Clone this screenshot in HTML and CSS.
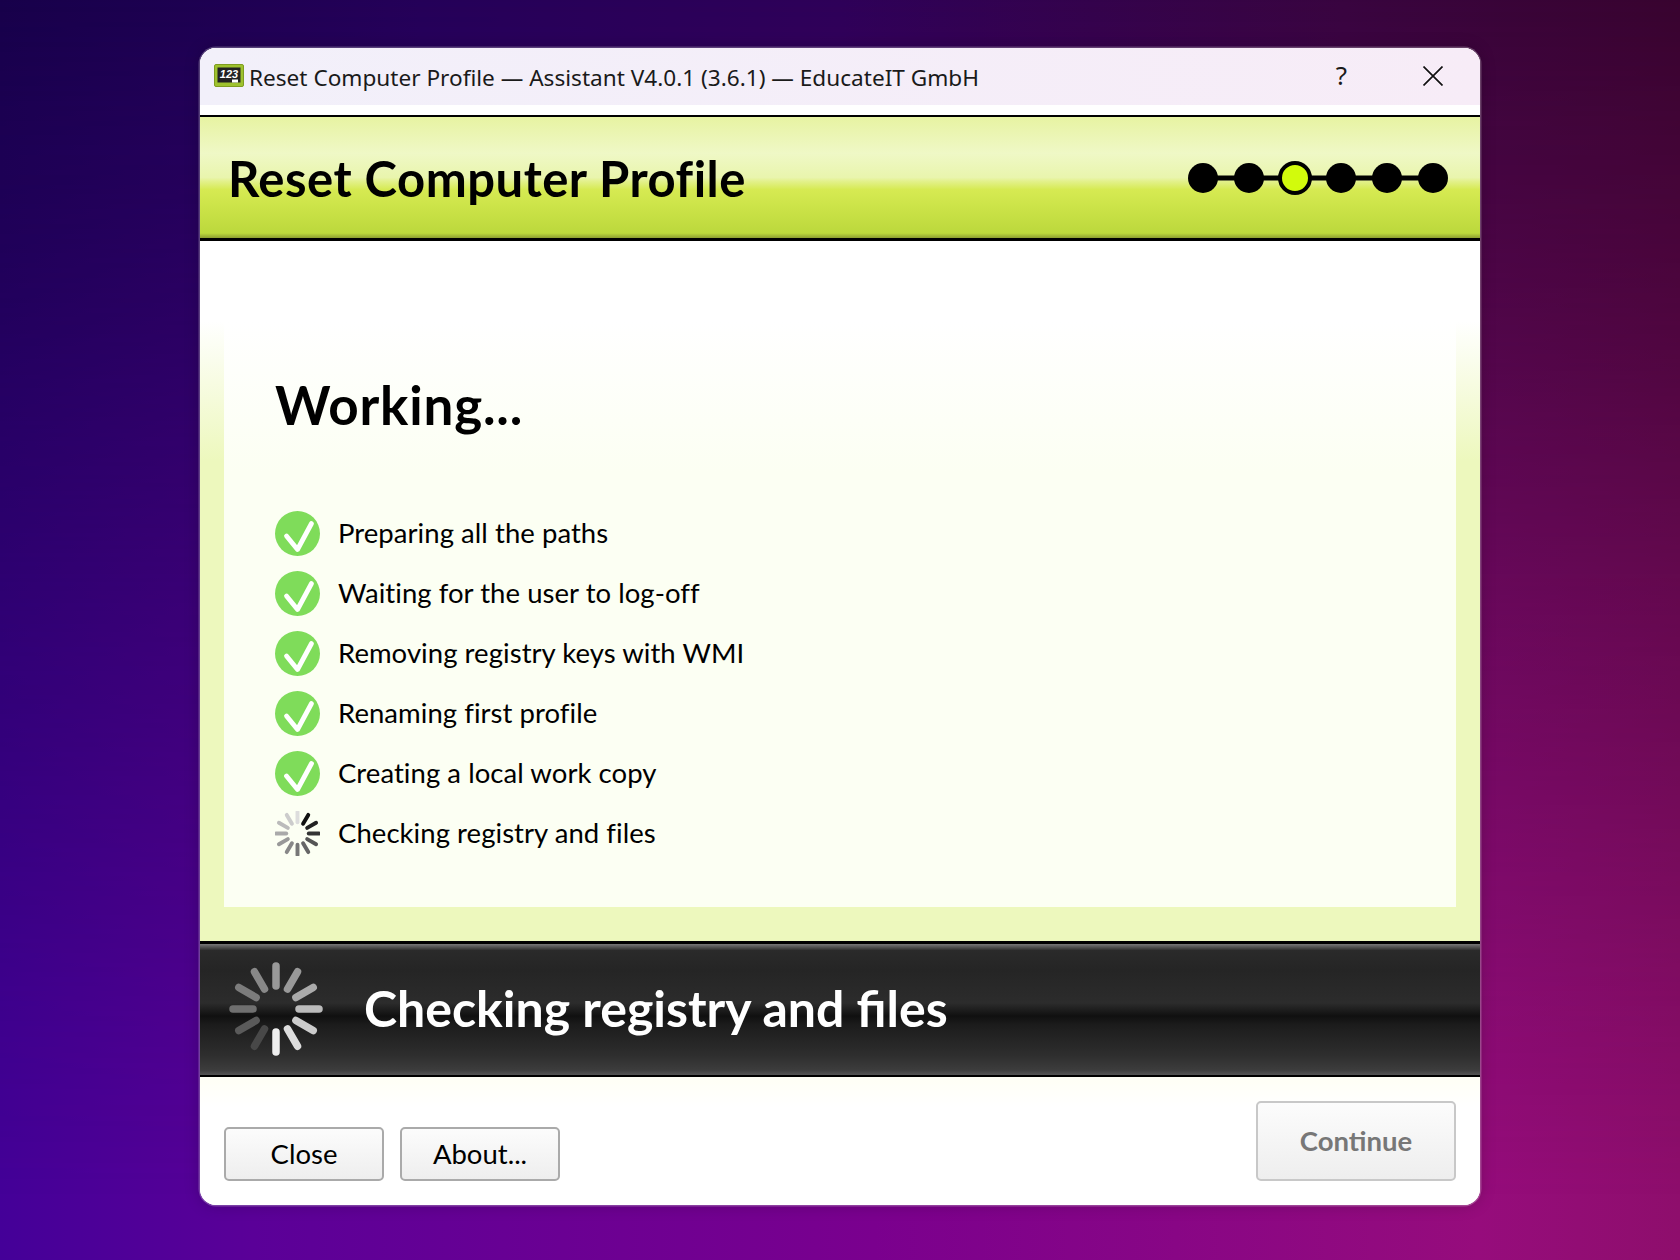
FILE: index.html
```html
<!DOCTYPE html>
<html lang="en">
<head>
<meta charset="utf-8">
<title>Reset Computer Profile</title>
<link rel="stylesheet" href="styles.css">
</head>
<body>
<svg class="defs" width="0" height="0" aria-hidden="true">
  <defs>
    <symbol id="check" viewBox="0 0 45 45">
      <circle cx="22.5" cy="22.5" r="22.5" fill="#7fdc5a"/>
      <path d="M11.5 25 L22.5 38.5 L36.5 12.5" fill="none" stroke="#fff" stroke-width="4.8" stroke-linecap="round" stroke-linejoin="round"/>
    </symbol>
  </defs>
</svg>
<main class="window">
  <div class="titlebar">
    <svg class="app-icon" width="30" height="23" viewBox="0 0 30 23">
      <rect x="0.5" y="0.5" width="29" height="22" rx="1.5" fill="#9ec22e" stroke="#7f9c20"/>
      <rect x="3.5" y="3.5" width="23" height="15" fill="#222"/>
      <text x="15" y="14" text-anchor="middle" class="app-icon-text">123</text>
      <rect x="18" y="15.5" width="6" height="3" fill="#fff"/>
    </svg>
    <span class="title-text">Reset Computer Profile — Assistant V4.0.1 (3.6.1) — EducateIT GmbH</span>
    <span class="help">?</span>
    <svg class="close-x" width="20" height="20" viewBox="0 0 20 20"><path d="M0.5 0.5 L19.5 19.5 M19.5 0.5 L0.5 19.5" stroke="#111" stroke-width="1.7" fill="none"/></svg>
  </div>
  <header class="banner">
    <h1 class="banner-title">Reset Computer Profile</h1>
    <svg class="steps" width="262" height="36" viewBox="0 0 262 36">
      <line x1="16" y1="18" x2="246" y2="18" stroke="#000" stroke-width="5"/>
      <circle cx="16" cy="18" r="15" fill="#000"/>
      <circle cx="62" cy="18" r="15" fill="#000"/>
      <circle cx="108" cy="18" r="15" fill="#d2fb0c" stroke="#000" stroke-width="4"/>
      <circle cx="154" cy="18" r="15" fill="#000"/>
      <circle cx="200" cy="18" r="15" fill="#000"/>
      <circle cx="246" cy="18" r="15" fill="#000"/>
    </svg>
  </header>
  <section class="body">
    <div class="panel">
      <h2 class="heading">Working...</h2>
      <ul class="tasks">
        <li class="task"><svg class="task-icon"><use href="#check"/></svg>Preparing all the paths</li>
        <li class="task"><svg class="task-icon"><use href="#check"/></svg>Waiting for the user to log-off</li>
        <li class="task"><svg class="task-icon"><use href="#check"/></svg>Removing registry keys with WMI</li>
        <li class="task"><svg class="task-icon"><use href="#check"/></svg>Renaming first profile</li>
        <li class="task"><svg class="task-icon"><use href="#check"/></svg>Creating a local work copy</li>
        <li class="task">
          <svg class="task-icon" viewBox="-23 -23 46 46" stroke-width="4" stroke-linecap="round">
            <line x1="5.7" y1="-9.9" x2="11" y2="-19" stroke="#111"/>
            <line x1="9.9" y1="-5.7" x2="19" y2="-11" stroke="#222"/>
            <line x1="11.5" y1="0" x2="22" y2="0" stroke="#333"/>
            <line x1="9.9" y1="5.7" x2="19" y2="11" stroke="#555"/>
            <line x1="5.7" y1="9.9" x2="11" y2="19" stroke="#666"/>
            <line x1="0" y1="11.5" x2="0" y2="22" stroke="#777"/>
            <line x1="-5.7" y1="9.9" x2="-11" y2="19" stroke="#888"/>
            <line x1="-9.9" y1="5.7" x2="-19" y2="11" stroke="#999"/>
            <line x1="-11.5" y1="0" x2="-22" y2="0" stroke="#aaa"/>
            <line x1="-9.9" y1="-5.7" x2="-19" y2="-11" stroke="#bbb"/>
            <line x1="-5.7" y1="-9.9" x2="-11" y2="-19" stroke="#ccc"/>
            <line x1="0" y1="-11.5" x2="0" y2="-22" stroke="#ddd"/>
          </svg>Checking registry and files
        </li>
      </ul>
    </div>
  </section>
  <div class="status">
    <svg class="status-spin" width="96" height="96" viewBox="-48 -48 96 96" stroke-width="7.5" stroke-linecap="round">
      <line x1="0" y1="-23" x2="0" y2="-43" stroke="#999"/>
      <line x1="11.5" y1="-19.9" x2="21.5" y2="-37.2" stroke="#999"/>
      <line x1="19.9" y1="-11.5" x2="37.2" y2="-21.5" stroke="#aaa"/>
      <line x1="23" y1="0" x2="43" y2="0" stroke="#bbb"/>
      <line x1="19.9" y1="11.5" x2="37.2" y2="21.5" stroke="#ccc"/>
      <line x1="11.5" y1="19.9" x2="21.5" y2="37.2" stroke="#ddd"/>
      <line x1="0" y1="23" x2="0" y2="43" stroke="#eee"/>
      <line x1="-11.5" y1="19.9" x2="-21.5" y2="37.2" stroke="#484848"/>
      <line x1="-19.9" y1="11.5" x2="-37.2" y2="21.5" stroke="#5a5a5a"/>
      <line x1="-23" y1="0" x2="-43" y2="0" stroke="#707070"/>
      <line x1="-19.9" y1="-11.5" x2="-37.2" y2="-21.5" stroke="#7c7c7c"/>
      <line x1="-11.5" y1="-19.9" x2="-21.5" y2="-37.2" stroke="#888"/>
    </svg>
    <span class="status-text">Checking registry and files</span>
  </div>
  <footer class="footer">
    <button class="btn">Close</button>
    <button class="btn">About...</button>
    <button class="btn btn-primary" disabled>Continue</button>
  </footer>
</main>
</body>
</html>
```
FILE: styles.css
```css
* { box-sizing: border-box; }
html, body { margin: 0; height: 100%; }
body {
  position: relative;
  width: 1680px;
  height: 1260px;
  overflow: hidden;
  padding: 48px 200px 55px;
  font-family: "Lato", "Liberation Sans", sans-serif;
  color: #000;
  background: linear-gradient(90deg, #440098 0%, #5a0098 15%, #7a008e 52%, #960c7c 88%, #8e0e6c 100%);
}
body::before {
  content: "";
  position: absolute;
  inset: 0;
  background: linear-gradient(90deg, #17004a 0%, #240058 25%, #2e0058 50%, #38043f 80%, #38032f 100%);
  -webkit-mask-image: linear-gradient(180deg, #000 0%, rgba(0,0,0,.75) 25%, rgba(0,0,0,.45) 50%, rgba(0,0,0,.14) 80%, transparent 95%);
  mask-image: linear-gradient(180deg, #000 0%, rgba(0,0,0,.75) 25%, rgba(0,0,0,.45) 50%, rgba(0,0,0,.14) 80%, transparent 95%);
}
.defs { position: absolute; }
.window {
  position: relative;
  width: 1280px;
  height: 1157px;
  border-radius: 16px;
  overflow: hidden;
  background: #fff;
  display: flex;
  flex-direction: column;
  box-shadow: 0 0 0 1.5px rgba(255,255,255,.25), 0 0 16px rgba(0,0,0,.22);
}
.titlebar {
  height: 69px;
  flex: none;
  display: flex;
  align-items: flex-start;
  padding: 17px 37px 0 14px;
  background: linear-gradient(90deg, #f2f0fa, #f7ecf7) top / 100% 57px no-repeat, #fff;
  border-bottom: 2px solid #000;
  font-family: "Noto Sans", "Open Sans", sans-serif;
}
.app-icon { flex: none; margin-top: -1px; }
.app-icon-text { font: italic 700 11px "Liberation Sans", sans-serif; fill: #fff; }
.title-text { margin: 1px 0 0 5px; font-size: 22.6px; line-height: 24px; color: #1a1a1a; flex: 1; white-space: nowrap; }
.help { font-size: 26px; line-height: 24px; margin-top: -2px; margin-right: 76px; color: #1a1a1a; }
.close-x { flex: none; margin-top: 1px; }
.banner {
  height: 124px;
  flex: none;
  display: flex;
  align-items: center;
  justify-content: space-between;
  padding: 0 31px 0 28px;
  border-bottom: 3px solid #000;
  background: linear-gradient(180deg, #e7f3a2 0%, #eff8c6 30%, #e9f5ad 50%, #e3f18d 53%, #d6ea52 60%, #cbe348 75%, #bcd83c 96%, #8d9e30 100%);
}
.banner-title { margin: 0; font-size: 49px; letter-spacing: .5px; line-height: 60px; font-weight: 700; }
.steps { flex: none; }
.body {
  height: 700px;
  flex: none;
  padding: 0 24px 34px;
  background: linear-gradient(180deg, #fff 0, #fff 80px, #edf8bd 220px);
}
.panel {
  height: 100%;
  padding: 134px 0 0 51px;
  background: linear-gradient(180deg, #fff 0, #fff 80px, #fcfff3 230px);
}
.heading { margin: 0 0 68px; font-size: 53px; letter-spacing: .8px; line-height: 60px; font-weight: 700; }
.tasks { list-style: none; margin: 0; padding: 0; }
.task { height: 60px; display: flex; align-items: center; padding-bottom: 2px; font-size: 27.5px; letter-spacing: .05px; }
.task-icon { width: 45px; height: 45px; margin: 2px 18px 0 0; flex: none; }
.status {
  height: 136px;
  flex: none;
  display: flex;
  align-items: center;
  gap: 40px;
  padding-left: 28px;
  border-top: 3px solid #000;
  border-bottom: 2px solid #000;
  background: linear-gradient(180deg, #777 0%, #2a2a2a 5%, #252525 20%, #2c2c2c 45%, #101010 55%, #1c1c1c 62%, #2e2e2e 85%, #3c3c3c 96%, #555 100%);
}
.status-spin { flex: none; margin-top: -2px; }
.status-text { font-size: 50px; line-height: 60px; margin-top: -3px; font-weight: 700; color: #fff; }
.footer {
  flex: 1;
  display: flex;
  align-items: flex-end;
  gap: 16px;
  padding: 0 24px 24px;
  background: linear-gradient(180deg, #fffff5 0, #fff 30px);
}
.btn {
  width: 160px;
  height: 54px;
  padding: 0 0 2px;
  font: 400 27.5px "Lato", sans-serif;
  color: #000;
  border: 2px solid #aaa;
  border-radius: 5px;
  background: linear-gradient(180deg, #fcfcfc, #eeeeee);
}
.btn-primary {
  width: 200px;
  height: 80px;
  margin-left: auto;
  font-weight: 700;
  color: #777;
  border-color: #c8c8c8;
}
```
